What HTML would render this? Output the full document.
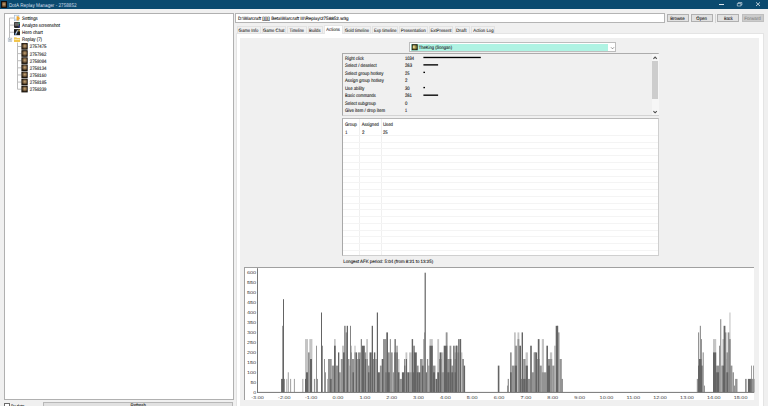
<!DOCTYPE html>
<html><head><meta charset="utf-8">
<style>
*{box-sizing:border-box;margin:0;padding:0}
html,body{width:768px;height:406px;overflow:hidden;background:#f0f0f0;font-family:"Liberation Sans",sans-serif;position:relative}
.a{position:absolute}
svg text{font-family:"Liberation Sans",sans-serif;text-rendering:geometricPrecision}
</style></head><body>
<div class="a" style="left:0px;top:0px;width:768px;height:9px;background:#0b4a6f"></div>
<div class="a" style="left:1px;top:1px;width:6px;height:7px;background:radial-gradient(circle at 50% 45%,#c8a878,#7a5a38 55%,#2a1c10);border:0.6px solid #111"></div>
<div class="a" style="left:719.3px;top:4.3px;width:4.7px;height:0.6px;background:#dce6ee"></div>
<div class="a" style="left:4px;top:13px;width:230px;height:387px;background:#fff;border:1px solid #b0b0b0"></div>
<div class="a" style="left:4.2px;top:403px;width:5.8px;height:6px;background:#fff;border:1px solid #6a6a6a"></div>
<div class="a" style="left:43.3px;top:402.1px;width:190.2px;height:8px;background:#e1e1e1;border:1px solid #b8b8b8"></div>
<div class="a" style="left:235.4px;top:13px;width:429.5px;height:10px;background:#fff;border:1px solid #b4b4b4"></div>
<div class="a" style="left:667px;top:14.0px;width:21.600000000000023px;height:8.4px;background:#e1e1e1;border:1px solid #b0b0b0"></div>
<div class="a" style="left:691.1px;top:14.0px;width:21.699999999999932px;height:8.4px;background:#e1e1e1;border:1px solid #b0b0b0"></div>
<div class="a" style="left:715.3px;top:13.5px;width:0.8px;height:9.5px;background:#d4d4d4"></div>
<div class="a" style="left:717.2px;top:14.0px;width:21.799999999999955px;height:8.4px;background:#e1e1e1;border:1px solid #b0b0b0"></div>
<div class="a" style="left:742px;top:14.0px;width:21.5px;height:8.4px;background:#cccccc;border:1px solid #bfbfbf"></div>
<div class="a" style="left:235.5px;top:33px;width:528px;height:380px;background:#fff;border:1px solid #e4e4e4"></div>
<div class="a" style="left:237px;top:25.8px;width:23.69999999999999px;height:7.3px;background:#f0f0f0;border:1px solid #e2e2e2;border-bottom:none"></div>
<div class="a" style="left:261.5px;top:25.8px;width:24.5px;height:7.3px;background:#f0f0f0;border:1px solid #e2e2e2;border-bottom:none"></div>
<div class="a" style="left:287px;top:25.8px;width:19.80000000000001px;height:7.3px;background:#f0f0f0;border:1px solid #e2e2e2;border-bottom:none"></div>
<div class="a" style="left:307.9px;top:25.8px;width:14.900000000000034px;height:7.3px;background:#f0f0f0;border:1px solid #e2e2e2;border-bottom:none"></div>
<div class="a" style="left:323.9px;top:24.9px;width:19.100000000000023px;height:9.2px;background:#fff;border:1px solid #e6e6e6;border-bottom:none;z-index:1"></div>
<div class="a" style="left:343.5px;top:25.8px;width:27.5px;height:7.3px;background:#f0f0f0;border:1px solid #e2e2e2;border-bottom:none"></div>
<div class="a" style="left:371.6px;top:25.8px;width:26.399999999999977px;height:7.3px;background:#f0f0f0;border:1px solid #e2e2e2;border-bottom:none"></div>
<div class="a" style="left:399.2px;top:25.8px;width:28.600000000000023px;height:7.3px;background:#f0f0f0;border:1px solid #e2e2e2;border-bottom:none"></div>
<div class="a" style="left:428.9px;top:25.8px;width:24.600000000000023px;height:7.3px;background:#f0f0f0;border:1px solid #e2e2e2;border-bottom:none"></div>
<div class="a" style="left:454.6px;top:25.8px;width:15.599999999999966px;height:7.3px;background:#f0f0f0;border:1px solid #e2e2e2;border-bottom:none"></div>
<div class="a" style="left:471.25px;top:25.8px;width:23.44999999999999px;height:7.3px;background:#f0f0f0;border:1px solid #e2e2e2;border-bottom:none"></div>
<div class="a" style="left:240px;top:37.8px;width:519px;height:380px;background:#f0f0f0"></div>
<div class="a" style="left:409.3px;top:42.2px;width:206.5px;height:10.3px;background:#fff;border:1px solid #bdbdbd"></div>
<div class="a" style="left:411px;top:44px;width:197px;height:6.6px;background:#aff3e3"></div>
<div class="a" style="left:342px;top:53px;width:317px;height:62.8px;background:#f0f0f0;border:1px solid #d4d4d4;border-left-color:#a8a8a8;border-top-color:#acacac"></div>
<div class="a" style="left:652px;top:54px;width:6.8px;height:61px;background:#f6f6f6"></div>
<div class="a" style="left:652.4px;top:61.2px;width:5.8px;height:37.6px;background:#cdcdcd"></div>
<div class="a" style="left:342px;top:118px;width:316.8px;height:137.6px;background:#fff;border:1px solid #cfcfcf;border-left-color:#a8a8a8;border-top-color:#b8b8b8"></div>
<div class="a" style="left:358.9px;top:119px;width:0.8px;height:136px;background:#f0f0f0"></div>
<div class="a" style="left:381.0px;top:119px;width:0.8px;height:136px;background:#f0f0f0"></div>
<div class="a" style="left:343px;top:134.9px;width:315px;height:0.8px;background:#f4f4f4"></div>
<div class="a" style="left:343px;top:141.67000000000002px;width:315px;height:0.8px;background:#f4f4f4"></div>
<div class="a" style="left:343px;top:148.44px;width:315px;height:0.8px;background:#f4f4f4"></div>
<div class="a" style="left:343px;top:155.21px;width:315px;height:0.8px;background:#f4f4f4"></div>
<div class="a" style="left:343px;top:161.98000000000002px;width:315px;height:0.8px;background:#f4f4f4"></div>
<div class="a" style="left:343px;top:168.75px;width:315px;height:0.8px;background:#f4f4f4"></div>
<div class="a" style="left:343px;top:175.52px;width:315px;height:0.8px;background:#f4f4f4"></div>
<div class="a" style="left:343px;top:182.29000000000002px;width:315px;height:0.8px;background:#f4f4f4"></div>
<div class="a" style="left:343px;top:189.06px;width:315px;height:0.8px;background:#f4f4f4"></div>
<div class="a" style="left:343px;top:195.82999999999998px;width:315px;height:0.8px;background:#f4f4f4"></div>
<div class="a" style="left:343px;top:202.6px;width:315px;height:0.8px;background:#f4f4f4"></div>
<div class="a" style="left:343px;top:209.37px;width:315px;height:0.8px;background:#f4f4f4"></div>
<div class="a" style="left:343px;top:216.14px;width:315px;height:0.8px;background:#f4f4f4"></div>
<div class="a" style="left:343px;top:222.91px;width:315px;height:0.8px;background:#f4f4f4"></div>
<div class="a" style="left:343px;top:229.68px;width:315px;height:0.8px;background:#f4f4f4"></div>
<div class="a" style="left:343px;top:236.45px;width:315px;height:0.8px;background:#f4f4f4"></div>
<div class="a" style="left:343px;top:243.22px;width:315px;height:0.8px;background:#f4f4f4"></div>
<div class="a" style="left:343px;top:249.99px;width:315px;height:0.8px;background:#f4f4f4"></div>
<div class="a" style="left:244px;top:267.4px;width:510.2px;height:132.6px;background:#fff;border-left:1px solid #a0a0a0;border-top:1px solid #a0a0a0"></div>
<svg class="a" style="left:0;top:0;z-index:5" width="768" height="406" viewBox="0 0 768 406">
<defs><radialGradient id="rg" cx="0.55" cy="0.45" r="0.6"><stop offset="0" stop-color="#c8a878"/><stop offset="0.55" stop-color="#7a6040"/><stop offset="1" stop-color="#2a2014"/></radialGradient><radialGradient id="rg2" cx="0.45" cy="0.5" r="0.65"><stop offset="0" stop-color="#d8c060"/><stop offset="0.6" stop-color="#807838"/><stop offset="1" stop-color="#283020"/></radialGradient></defs>
<text transform="translate(0 6.60) scale(1 1.100)" x="8.90" y="0" font-size="4.82" fill="#d0dfe9" textLength="67.70" lengthAdjust="spacingAndGlyphs" stroke="#d0dfe9" stroke-width="0.02">DotA Replay Manager - 2758852</text>
<path d="M737.3 3.5h3.6v2.5h-3.6z M738.3 3.5V2.5h3.6v2.5h-1" fill="none" stroke="#dce6ee" stroke-width="0.6"/>
<path d="M756 2.3L760 6M760 2.3L756 6" fill="none" stroke="#e0e8ee" stroke-width="0.8"/>
<path d="M9.5 18V38" stroke="#bcbcbc" stroke-width="1" fill="none"/>
<path d="M9.5 18.00H14" stroke="#bcbcbc" stroke-width="1" fill="none"/>
<path d="M9.5 25.12H14" stroke="#bcbcbc" stroke-width="1" fill="none"/>
<path d="M9.5 32.24H14" stroke="#bcbcbc" stroke-width="1" fill="none"/>
<path d="M17.5 42.5V89.20" stroke="#bcbcbc" stroke-width="1" fill="none"/>
<path d="M17.5 46.48H21.4" stroke="#bcbcbc" stroke-width="1" fill="none"/>
<path d="M17.5 53.60H21.4" stroke="#bcbcbc" stroke-width="1" fill="none"/>
<path d="M17.5 60.72H21.4" stroke="#bcbcbc" stroke-width="1" fill="none"/>
<path d="M17.5 67.84H21.4" stroke="#bcbcbc" stroke-width="1" fill="none"/>
<path d="M17.5 74.96H21.4" stroke="#bcbcbc" stroke-width="1" fill="none"/>
<path d="M17.5 82.08H21.4" stroke="#bcbcbc" stroke-width="1" fill="none"/>
<path d="M17.5 89.20H21.4" stroke="#bcbcbc" stroke-width="1" fill="none"/>
<rect x="8.2" y="38.1" width="3.6" height="3.6" fill="#eef1f4" stroke="#a8b4c0" stroke-width="0.6"/>
<path d="M9.1 39.9H10.9" stroke="#404850" stroke-width="0.6"/>
<rect x="14.3" y="15.2" width="4.6" height="5.6" fill="#f6f9fc" stroke="#9ab4cc" stroke-width="0.6"/>
<rect x="15" y="18.6" width="3" height="1.6" fill="#c8dcef"/>
<path d="M16.6 16.2h1.6l1.8 2.1-1.8 2.1h-1.6z" fill="#f0a830"/>
<rect x="14" y="22" width="6" height="5.9" rx="0.8" fill="#2a2a2a"/>
<rect x="14.6" y="22.6" width="4.6" height="3.2" fill="#6a6a6a"/>
<rect x="18.5" y="22.4" width="1.3" height="1.5" fill="#30a080"/>
<rect x="18.5" y="25.6" width="1.4" height="1.8" fill="#2a3aa0"/>
<rect x="14" y="29.1" width="6" height="6.1" fill="#1e1e1e"/>
<path d="M14.8 34.5L17 30.2h1.2l-2 4.3z" fill="#c8d4e0"/>
<rect x="18.4" y="29.6" width="1.4" height="1.8" fill="#e0c050"/>
<rect x="14.8" y="33.3" width="1.5" height="1.5" fill="#5a8ac0"/>
<path d="M14 37.3h2.4l0.6 0.7H20V41.8H14z" fill="#f4cc60"/>
<rect x="14" y="38.6" width="6" height="3.2" fill="#f0c040"/>
<rect x="14.3" y="38.9" width="5.4" height="1.2" fill="#fbe8a8"/>
<rect x="21.4" y="43.08" width="6.3" height="6.6" fill="#15110a"/>
<rect x="22.0" y="43.68" width="5.1" height="5.2" fill="url(#rg)"/>
<rect x="21.4" y="50.20" width="6.3" height="6.6" fill="#15110a"/>
<rect x="22.0" y="50.80" width="5.1" height="5.2" fill="url(#rg)"/>
<rect x="21.4" y="57.32" width="6.3" height="6.6" fill="#15110a"/>
<rect x="22.0" y="57.92" width="5.1" height="5.2" fill="url(#rg)"/>
<rect x="21.4" y="64.44" width="6.3" height="6.6" fill="#15110a"/>
<rect x="22.0" y="65.04" width="5.1" height="5.2" fill="url(#rg)"/>
<rect x="21.4" y="71.56" width="6.3" height="6.6" fill="#15110a"/>
<rect x="22.0" y="72.16" width="5.1" height="5.2" fill="url(#rg)"/>
<rect x="21.4" y="78.68" width="6.3" height="6.6" fill="#15110a"/>
<rect x="22.0" y="79.28" width="5.1" height="5.2" fill="url(#rg)"/>
<rect x="21.4" y="85.80" width="6.3" height="6.6" fill="#15110a"/>
<rect x="22.0" y="86.40" width="5.1" height="5.2" fill="url(#rg)"/>
<text transform="translate(0 19.90) scale(1 1.100)" x="22.10" y="0" font-size="4.55" fill="#202020" textLength="15.70" lengthAdjust="spacingAndGlyphs" stroke="#202020" stroke-width="0.09">Settings</text>
<text transform="translate(0 27.02) scale(1 1.100)" x="22.10" y="0" font-size="4.55" fill="#202020" textLength="37.90" lengthAdjust="spacingAndGlyphs" stroke="#202020" stroke-width="0.09">Analyze screenshot</text>
<text transform="translate(0 34.14) scale(1 1.100)" x="22.10" y="0" font-size="4.55" fill="#202020" textLength="20.60" lengthAdjust="spacingAndGlyphs" stroke="#202020" stroke-width="0.09">Hero chart</text>
<text transform="translate(0 41.26) scale(1 1.100)" x="22.10" y="0" font-size="4.55" fill="#202020" textLength="19.90" lengthAdjust="spacingAndGlyphs" stroke="#202020" stroke-width="0.09">Replay (7)</text>
<text transform="translate(0 48.38) scale(1 1.100)" x="29.80" y="0" font-size="4.55" fill="#202020" textLength="16.70" lengthAdjust="spacingAndGlyphs" stroke="#202020" stroke-width="0.09">2757475</text>
<text transform="translate(0 55.50) scale(1 1.100)" x="29.80" y="0" font-size="4.55" fill="#202020" textLength="16.70" lengthAdjust="spacingAndGlyphs" stroke="#202020" stroke-width="0.09">2757962</text>
<text transform="translate(0 62.62) scale(1 1.100)" x="29.80" y="0" font-size="4.55" fill="#202020" textLength="16.70" lengthAdjust="spacingAndGlyphs" stroke="#202020" stroke-width="0.09">2758084</text>
<text transform="translate(0 69.74) scale(1 1.100)" x="29.80" y="0" font-size="4.55" fill="#202020" textLength="16.70" lengthAdjust="spacingAndGlyphs" stroke="#202020" stroke-width="0.09">2758134</text>
<text transform="translate(0 76.86) scale(1 1.100)" x="29.80" y="0" font-size="4.55" fill="#202020" textLength="16.70" lengthAdjust="spacingAndGlyphs" stroke="#202020" stroke-width="0.09">2758160</text>
<text transform="translate(0 83.98) scale(1 1.100)" x="29.80" y="0" font-size="4.55" fill="#202020" textLength="16.70" lengthAdjust="spacingAndGlyphs" stroke="#202020" stroke-width="0.09">2758185</text>
<text transform="translate(0 91.10) scale(1 1.100)" x="29.80" y="0" font-size="4.55" fill="#202020" textLength="16.70" lengthAdjust="spacingAndGlyphs" stroke="#202020" stroke-width="0.09">2758339</text>
<text transform="translate(0 407.60) scale(1 1.100)" x="11.10" y="0" font-size="4.55" fill="#202020" textLength="13.40" lengthAdjust="spacingAndGlyphs" stroke="#202020" stroke-width="0.09">By date</text>
<text transform="translate(0 406.80) scale(1 1.100)" x="130.50" y="0" font-size="4.55" fill="#202020" textLength="15.50" lengthAdjust="spacingAndGlyphs" stroke="#202020" stroke-width="0.09">Refresh</text>
<text transform="translate(0 19.80) scale(1 1.100)" x="237.90" y="0" font-size="4.18" fill="#202020" textLength="110.70" lengthAdjust="spacingAndGlyphs" stroke="#202020" stroke-width="0.09">D:\Warcraft [][][] Beta\Warcraft III\Replay\2758852.w3g</text>
<text transform="translate(0 19.90) scale(1 1.100)" x="670.20" y="0" font-size="4.36" fill="#202020" textLength="14.50" lengthAdjust="spacingAndGlyphs" stroke="#202020" stroke-width="0.09">Browse</text>
<text transform="translate(0 19.90) scale(1 1.100)" x="696.30" y="0" font-size="4.36" fill="#202020" textLength="10.50" lengthAdjust="spacingAndGlyphs" stroke="#202020" stroke-width="0.09">Open</text>
<text transform="translate(0 19.90) scale(1 1.100)" x="724.00" y="0" font-size="4.36" fill="#202020" textLength="8.80" lengthAdjust="spacingAndGlyphs" stroke="#202020" stroke-width="0.09">Back</text>
<text transform="translate(0 19.90) scale(1 1.100)" x="744.30" y="0" font-size="4.36" fill="#888888" textLength="16.40" lengthAdjust="spacingAndGlyphs" stroke="#888888" stroke-width="0.09">Forward</text>
<text transform="translate(0 31.80) scale(1 1.100)" x="238.60" y="0" font-size="4.36" fill="#202020" textLength="19.80" lengthAdjust="spacingAndGlyphs" stroke="#202020" stroke-width="0.06">Game Info</text>
<text transform="translate(0 31.80) scale(1 1.100)" x="263.00" y="0" font-size="4.36" fill="#202020" textLength="21.50" lengthAdjust="spacingAndGlyphs" stroke="#202020" stroke-width="0.06">Game Chat</text>
<text transform="translate(0 31.80) scale(1 1.100)" x="289.60" y="0" font-size="4.36" fill="#202020" textLength="14.40" lengthAdjust="spacingAndGlyphs" stroke="#202020" stroke-width="0.06">Timeline</text>
<text transform="translate(0 31.80) scale(1 1.100)" x="309.10" y="0" font-size="4.36" fill="#202020" textLength="11.40" lengthAdjust="spacingAndGlyphs" stroke="#202020" stroke-width="0.06">Builds</text>
<text transform="translate(0 31.10) scale(1 1.100)" x="326.30" y="0" font-size="4.36" fill="#202020" textLength="13.60" lengthAdjust="spacingAndGlyphs" stroke="#202020" stroke-width="0.06">Actions</text>
<text transform="translate(0 31.80) scale(1 1.100)" x="345.00" y="0" font-size="4.36" fill="#202020" textLength="24.00" lengthAdjust="spacingAndGlyphs" stroke="#202020" stroke-width="0.06">Gold timeline</text>
<text transform="translate(0 31.80) scale(1 1.100)" x="374.00" y="0" font-size="4.36" fill="#202020" textLength="22.60" lengthAdjust="spacingAndGlyphs" stroke="#202020" stroke-width="0.06">Exp timeline</text>
<text transform="translate(0 31.80) scale(1 1.100)" x="400.70" y="0" font-size="4.36" fill="#202020" textLength="25.00" lengthAdjust="spacingAndGlyphs" stroke="#202020" stroke-width="0.06">Presentation</text>
<text transform="translate(0 31.80) scale(1 1.100)" x="430.40" y="0" font-size="4.36" fill="#202020" textLength="21.10" lengthAdjust="spacingAndGlyphs" stroke="#202020" stroke-width="0.06">ExtPresent</text>
<text transform="translate(0 31.80) scale(1 1.100)" x="456.00" y="0" font-size="4.36" fill="#202020" textLength="10.50" lengthAdjust="spacingAndGlyphs" stroke="#202020" stroke-width="0.06">Draft</text>
<text transform="translate(0 31.80) scale(1 1.100)" x="473.30" y="0" font-size="4.36" fill="#202020" textLength="20.30" lengthAdjust="spacingAndGlyphs" stroke="#202020" stroke-width="0.06">Action Log</text>
<rect x="411.7" y="44.2" width="6" height="6" fill="#221c10"/>
<rect x="412.3" y="44.8" width="4.8" height="4.8" fill="url(#rg2)"/>
<rect x="413.2" y="45.6" width="1.2" height="2.6" fill="#e8e0b0"/>
<text transform="translate(0 49.40) scale(1 1.100)" x="418.80" y="0" font-size="4.36" fill="#202020" textLength="33.20" lengthAdjust="spacingAndGlyphs" stroke="#202020" stroke-width="0.09">TheKing (Songan)</text>
<path d="M611 47.3L612.5 48.8L614 47.3" fill="none" stroke="#606060" stroke-width="0.7"/>
<path d="M653.4 58.8L655.1 57.1L656.8 58.8" fill="none" stroke="#505050" stroke-width="1.1"/>
<path d="M653.4 111.1L655.1 112.8L656.8 111.1" fill="none" stroke="#505050" stroke-width="1.1"/>
<text transform="translate(0 59.70) scale(1 1.100)" x="345.00" y="0" font-size="4.45" fill="#202020" textLength="18.90" lengthAdjust="spacingAndGlyphs" stroke="#202020" stroke-width="0.09">Right click</text>
<text transform="translate(0 59.70) scale(1 1.100)" x="404.90" y="0" font-size="4.45" fill="#202020" textLength="9.10" lengthAdjust="spacingAndGlyphs" stroke="#202020" stroke-width="0.09">1034</text>
<text transform="translate(0 67.10) scale(1 1.100)" x="345.00" y="0" font-size="4.45" fill="#202020" textLength="31.70" lengthAdjust="spacingAndGlyphs" stroke="#202020" stroke-width="0.09">Select / deselect</text>
<text transform="translate(0 67.10) scale(1 1.100)" x="404.90" y="0" font-size="4.45" fill="#202020" textLength="7.20" lengthAdjust="spacingAndGlyphs" stroke="#202020" stroke-width="0.09">263</text>
<text transform="translate(0 74.60) scale(1 1.100)" x="345.00" y="0" font-size="4.45" fill="#202020" textLength="38.40" lengthAdjust="spacingAndGlyphs" stroke="#202020" stroke-width="0.09">Select group hotkey</text>
<text transform="translate(0 74.60) scale(1 1.100)" x="404.90" y="0" font-size="4.45" fill="#202020" textLength="4.50" lengthAdjust="spacingAndGlyphs" stroke="#202020" stroke-width="0.09">25</text>
<text transform="translate(0 82.00) scale(1 1.100)" x="345.00" y="0" font-size="4.45" fill="#202020" textLength="38.80" lengthAdjust="spacingAndGlyphs" stroke="#202020" stroke-width="0.09">Assign group hotkey</text>
<text transform="translate(0 82.00) scale(1 1.100)" x="404.90" y="0" font-size="4.45" fill="#202020" textLength="2.40" lengthAdjust="spacingAndGlyphs" stroke="#202020" stroke-width="0.09">2</text>
<text transform="translate(0 89.80) scale(1 1.100)" x="345.00" y="0" font-size="4.45" fill="#202020" textLength="19.50" lengthAdjust="spacingAndGlyphs" stroke="#202020" stroke-width="0.09">Use ability</text>
<text transform="translate(0 89.80) scale(1 1.100)" x="404.90" y="0" font-size="4.45" fill="#202020" textLength="4.70" lengthAdjust="spacingAndGlyphs" stroke="#202020" stroke-width="0.09">30</text>
<text transform="translate(0 97.40) scale(1 1.100)" x="345.00" y="0" font-size="4.45" fill="#202020" textLength="30.90" lengthAdjust="spacingAndGlyphs" stroke="#202020" stroke-width="0.09">Basic commands</text>
<text transform="translate(0 97.40) scale(1 1.100)" x="404.90" y="0" font-size="4.45" fill="#202020" textLength="7.10" lengthAdjust="spacingAndGlyphs" stroke="#202020" stroke-width="0.09">261</text>
<text transform="translate(0 104.80) scale(1 1.100)" x="345.00" y="0" font-size="4.45" fill="#202020" textLength="30.90" lengthAdjust="spacingAndGlyphs" stroke="#202020" stroke-width="0.09">Select subgroup</text>
<text transform="translate(0 104.80) scale(1 1.100)" x="404.90" y="0" font-size="4.45" fill="#202020" textLength="2.40" lengthAdjust="spacingAndGlyphs" stroke="#202020" stroke-width="0.09">0</text>
<text transform="translate(0 112.30) scale(1 1.100)" x="345.00" y="0" font-size="4.45" fill="#202020" textLength="40.00" lengthAdjust="spacingAndGlyphs" stroke="#202020" stroke-width="0.09">Give item / drop item</text>
<text transform="translate(0 112.30) scale(1 1.100)" x="404.90" y="0" font-size="4.45" fill="#202020" textLength="2.10" lengthAdjust="spacingAndGlyphs" stroke="#202020" stroke-width="0.09">1</text>
<rect x="423.4" y="56.80" width="57.40" height="1.35" fill="#000"/>
<rect x="423.4" y="64.20" width="14.70" height="1.35" fill="#000"/>
<rect x="423.4" y="71.70" width="1.60" height="1.35" fill="#000"/>
<rect x="423.4" y="86.90" width="1.60" height="1.35" fill="#000"/>
<rect x="423.4" y="94.50" width="14.70" height="1.35" fill="#000"/>
<text transform="translate(0 125.90) scale(1 1.100)" x="345.00" y="0" font-size="4.45" fill="#202020" textLength="11.90" lengthAdjust="spacingAndGlyphs" stroke="#202020" stroke-width="0.09">Group</text>
<text transform="translate(0 125.90) scale(1 1.100)" x="361.70" y="0" font-size="4.45" fill="#202020" textLength="17.10" lengthAdjust="spacingAndGlyphs" stroke="#202020" stroke-width="0.09">Assigned</text>
<text transform="translate(0 125.90) scale(1 1.100)" x="382.90" y="0" font-size="4.45" fill="#202020" textLength="10.00" lengthAdjust="spacingAndGlyphs" stroke="#202020" stroke-width="0.09">Used</text>
<text transform="translate(0 133.60) scale(1 1.100)" x="345.30" y="0" font-size="4.45" fill="#202020" textLength="2.10" lengthAdjust="spacingAndGlyphs" stroke="#202020" stroke-width="0.09">1</text>
<text transform="translate(0 133.60) scale(1 1.100)" x="361.90" y="0" font-size="4.45" fill="#202020" textLength="2.50" lengthAdjust="spacingAndGlyphs" stroke="#202020" stroke-width="0.09">2</text>
<text transform="translate(0 133.60) scale(1 1.100)" x="382.90" y="0" font-size="4.45" fill="#202020" textLength="4.70" lengthAdjust="spacingAndGlyphs" stroke="#202020" stroke-width="0.09">25</text>
<text transform="translate(0 262.90) scale(1 1.100)" x="343.30" y="0" font-size="4.18" fill="#202020" textLength="89.80" lengthAdjust="spacingAndGlyphs" stroke="#202020" stroke-width="0.09">Longest AFK period: 5:04 (from 8:21 to 13:25)</text>
<rect x="286.0" y="378.9" width="1.3" height="13.3" fill="#c4c4c4"/>
<rect x="305.0" y="339.1" width="3.0" height="53.1" fill="#c4c4c4"/>
<rect x="309.3" y="339.1" width="3.1" height="53.1" fill="#c4c4c4"/>
<rect x="334.0" y="339.1" width="1.7" height="53.1" fill="#c4c4c4"/>
<rect x="342.0" y="345.7" width="2.0" height="46.5" fill="#c4c4c4"/>
<rect x="351.0" y="345.7" width="1.0" height="46.5" fill="#c4c4c4"/>
<rect x="354.4" y="345.7" width="1.2" height="46.5" fill="#c4c4c4"/>
<rect x="366.2" y="339.1" width="1.8" height="53.1" fill="#c4c4c4"/>
<rect x="397.7" y="359.0" width="1.8" height="33.2" fill="#c4c4c4"/>
<rect x="405.5" y="352.4" width="1.8" height="39.8" fill="#c4c4c4"/>
<rect x="409.1" y="352.4" width="2.6" height="39.8" fill="#c4c4c4"/>
<rect x="429.5" y="339.1" width="3.3" height="53.1" fill="#c4c4c4"/>
<rect x="437.3" y="339.1" width="1.8" height="53.1" fill="#c4c4c4"/>
<rect x="441.5" y="352.4" width="1.8" height="39.8" fill="#c4c4c4"/>
<rect x="445.5" y="332.4" width="1.8" height="59.8" fill="#c4c4c4"/>
<rect x="454.6" y="352.4" width="1.8" height="39.8" fill="#c4c4c4"/>
<rect x="459.3" y="352.4" width="1.8" height="39.8" fill="#c4c4c4"/>
<rect x="461.1" y="352.4" width="1.3" height="39.8" fill="#c4c4c4"/>
<rect x="514.0" y="332.4" width="1.8" height="59.8" fill="#c4c4c4"/>
<rect x="517.5" y="332.4" width="1.8" height="59.8" fill="#c4c4c4"/>
<rect x="525.6" y="352.4" width="2.3" height="39.8" fill="#c4c4c4"/>
<rect x="533.7" y="352.4" width="2.3" height="39.8" fill="#c4c4c4"/>
<rect x="541.8" y="339.1" width="2.2" height="53.1" fill="#c4c4c4"/>
<rect x="549.9" y="352.4" width="2.3" height="39.8" fill="#c4c4c4"/>
<rect x="554.0" y="345.7" width="1.7" height="46.5" fill="#c4c4c4"/>
<rect x="713.0" y="339.1" width="3.2" height="53.1" fill="#c4c4c4"/>
<rect x="722.4" y="339.1" width="2.3" height="53.1" fill="#c4c4c4"/>
<rect x="729.4" y="312.5" width="1.1" height="79.7" fill="#c4c4c4"/>
<rect x="287.8" y="372.3" width="0.9" height="19.9" fill="#949494"/>
<rect x="290.2" y="378.9" width="0.9" height="13.3" fill="#949494"/>
<rect x="293.9" y="378.9" width="0.9" height="13.3" fill="#949494"/>
<rect x="302.4" y="378.9" width="0.9" height="13.3" fill="#949494"/>
<rect x="308.0" y="352.4" width="1.7" height="39.8" fill="#949494"/>
<rect x="313.9" y="378.9" width="1.3" height="13.3" fill="#949494"/>
<rect x="316.0" y="345.7" width="1.0" height="46.5" fill="#949494"/>
<rect x="317.0" y="378.9" width="1.0" height="13.3" fill="#949494"/>
<rect x="322.0" y="345.7" width="1.0" height="46.5" fill="#949494"/>
<rect x="324.0" y="359.0" width="1.0" height="33.2" fill="#949494"/>
<rect x="325.0" y="372.3" width="1.0" height="19.9" fill="#949494"/>
<rect x="327.3" y="378.9" width="1.0" height="13.3" fill="#949494"/>
<rect x="328.0" y="359.0" width="3.7" height="33.2" fill="#949494"/>
<rect x="331.7" y="365.6" width="3.1" height="26.6" fill="#949494"/>
<rect x="335.7" y="365.6" width="2.7" height="26.6" fill="#949494"/>
<rect x="339.0" y="372.3" width="1.8" height="19.9" fill="#949494"/>
<rect x="340.8" y="359.0" width="3.2" height="33.2" fill="#949494"/>
<rect x="344.0" y="325.8" width="1.0" height="66.4" fill="#949494"/>
<rect x="345.7" y="332.4" width="1.8" height="59.8" fill="#949494"/>
<rect x="348.0" y="359.0" width="1.5" height="33.2" fill="#949494"/>
<rect x="349.5" y="365.6" width="0.7" height="26.6" fill="#949494"/>
<rect x="351.0" y="352.4" width="1.0" height="39.8" fill="#949494"/>
<rect x="352.0" y="359.0" width="2.4" height="33.2" fill="#949494"/>
<rect x="354.4" y="352.4" width="1.2" height="39.8" fill="#949494"/>
<rect x="357.1" y="359.0" width="0.9" height="33.2" fill="#949494"/>
<rect x="358.0" y="352.4" width="2.8" height="39.8" fill="#949494"/>
<rect x="364.8" y="352.4" width="1.4" height="39.8" fill="#949494"/>
<rect x="366.2" y="359.0" width="1.8" height="33.2" fill="#949494"/>
<rect x="367.7" y="365.6" width="1.8" height="26.6" fill="#949494"/>
<rect x="373.0" y="359.0" width="1.4" height="33.2" fill="#949494"/>
<rect x="375.3" y="359.0" width="1.5" height="33.2" fill="#949494"/>
<rect x="379.9" y="365.6" width="1.8" height="26.6" fill="#949494"/>
<rect x="383.0" y="339.1" width="3.3" height="53.1" fill="#949494"/>
<rect x="388.0" y="352.4" width="1.8" height="39.8" fill="#949494"/>
<rect x="389.8" y="339.1" width="1.2" height="53.1" fill="#949494"/>
<rect x="391.0" y="352.4" width="1.7" height="39.8" fill="#949494"/>
<rect x="392.7" y="372.3" width="1.3" height="19.9" fill="#949494"/>
<rect x="394.0" y="352.4" width="2.4" height="39.8" fill="#949494"/>
<rect x="396.4" y="345.7" width="1.3" height="46.5" fill="#949494"/>
<rect x="399.5" y="378.9" width="2.4" height="13.3" fill="#949494"/>
<rect x="404.0" y="365.6" width="1.5" height="26.6" fill="#949494"/>
<rect x="405.5" y="372.3" width="1.8" height="19.9" fill="#949494"/>
<rect x="409.1" y="372.3" width="2.6" height="19.9" fill="#949494"/>
<rect x="413.1" y="345.7" width="1.9" height="46.5" fill="#949494"/>
<rect x="416.8" y="365.6" width="1.8" height="26.6" fill="#949494"/>
<rect x="420.0" y="359.0" width="2.7" height="33.2" fill="#949494"/>
<rect x="423.3" y="339.1" width="1.3" height="53.1" fill="#949494"/>
<rect x="424.0" y="332.4" width="0.8" height="59.8" fill="#949494"/>
<rect x="426.9" y="359.0" width="1.3" height="33.2" fill="#949494"/>
<rect x="428.2" y="365.6" width="1.3" height="26.6" fill="#949494"/>
<rect x="432.8" y="365.6" width="2.7" height="26.6" fill="#949494"/>
<rect x="439.1" y="359.0" width="2.4" height="33.2" fill="#949494"/>
<rect x="441.5" y="372.3" width="1.8" height="19.9" fill="#949494"/>
<rect x="443.3" y="372.3" width="1.8" height="19.9" fill="#949494"/>
<rect x="447.3" y="359.0" width="2.2" height="33.2" fill="#949494"/>
<rect x="449.5" y="345.7" width="1.8" height="46.5" fill="#949494"/>
<rect x="451.3" y="365.6" width="1.9" height="26.6" fill="#949494"/>
<rect x="454.6" y="359.0" width="1.8" height="33.2" fill="#949494"/>
<rect x="456.0" y="345.7" width="1.5" height="46.5" fill="#949494"/>
<rect x="457.3" y="352.4" width="1.4" height="39.8" fill="#949494"/>
<rect x="459.3" y="339.1" width="1.8" height="53.1" fill="#949494"/>
<rect x="507.0" y="385.6" width="1.2" height="6.6" fill="#949494"/>
<rect x="507.7" y="378.9" width="1.3" height="13.3" fill="#949494"/>
<rect x="510.0" y="352.4" width="1.7" height="39.8" fill="#949494"/>
<rect x="511.7" y="365.6" width="3.3" height="26.6" fill="#949494"/>
<rect x="515.0" y="345.7" width="2.0" height="46.5" fill="#949494"/>
<rect x="517.5" y="339.1" width="1.8" height="53.1" fill="#949494"/>
<rect x="521.0" y="378.9" width="2.2" height="13.3" fill="#949494"/>
<rect x="523.2" y="359.0" width="2.4" height="33.2" fill="#949494"/>
<rect x="527.9" y="378.9" width="2.3" height="13.3" fill="#949494"/>
<rect x="531.8" y="372.3" width="2.3" height="19.9" fill="#949494"/>
<rect x="533.7" y="352.4" width="2.3" height="39.8" fill="#949494"/>
<rect x="537.1" y="359.0" width="2.4" height="33.2" fill="#949494"/>
<rect x="539.5" y="365.6" width="2.3" height="26.6" fill="#949494"/>
<rect x="541.8" y="372.3" width="2.2" height="19.9" fill="#949494"/>
<rect x="544.0" y="372.3" width="2.4" height="19.9" fill="#949494"/>
<rect x="548.0" y="359.0" width="2.3" height="33.2" fill="#949494"/>
<rect x="549.9" y="359.0" width="2.3" height="33.2" fill="#949494"/>
<rect x="552.2" y="365.6" width="2.3" height="26.6" fill="#949494"/>
<rect x="556.0" y="359.0" width="1.9" height="33.2" fill="#949494"/>
<rect x="557.2" y="325.8" width="1.1" height="66.4" fill="#949494"/>
<rect x="557.9" y="332.4" width="1.6" height="59.8" fill="#949494"/>
<rect x="559.5" y="359.0" width="2.3" height="33.2" fill="#949494"/>
<rect x="561.0" y="378.9" width="2.0" height="13.3" fill="#949494"/>
<rect x="696.8" y="378.9" width="1.2" height="13.3" fill="#949494"/>
<rect x="698.0" y="332.4" width="1.1" height="59.8" fill="#949494"/>
<rect x="699.8" y="325.8" width="1.2" height="66.4" fill="#949494"/>
<rect x="701.0" y="339.1" width="1.0" height="53.1" fill="#949494"/>
<rect x="702.6" y="352.4" width="1.2" height="39.8" fill="#949494"/>
<rect x="703.8" y="385.6" width="1.2" height="6.6" fill="#949494"/>
<rect x="716.2" y="365.6" width="2.8" height="26.6" fill="#949494"/>
<rect x="719.0" y="345.7" width="1.1" height="46.5" fill="#949494"/>
<rect x="720.1" y="319.2" width="1.2" height="73.0" fill="#949494"/>
<rect x="721.3" y="365.6" width="1.1" height="26.6" fill="#949494"/>
<rect x="724.7" y="359.0" width="1.7" height="33.2" fill="#949494"/>
<rect x="724.7" y="332.4" width="1.7" height="59.8" fill="#949494"/>
<rect x="726.4" y="352.4" width="1.8" height="39.8" fill="#949494"/>
<rect x="727.7" y="332.4" width="1.7" height="59.8" fill="#949494"/>
<rect x="730.5" y="365.6" width="1.9" height="26.6" fill="#949494"/>
<rect x="732.4" y="372.3" width="1.6" height="19.9" fill="#949494"/>
<rect x="734.0" y="385.6" width="1.1" height="6.6" fill="#949494"/>
<rect x="735.1" y="378.9" width="2.4" height="13.3" fill="#949494"/>
<rect x="745.0" y="378.9" width="1.7" height="13.3" fill="#949494"/>
<rect x="750.2" y="378.9" width="4.4" height="13.3" fill="#949494"/>
<rect x="751.0" y="365.6" width="0.9" height="26.6" fill="#949494"/>
<rect x="753.0" y="365.6" width="0.9" height="26.6" fill="#949494"/>
<rect x="281.1" y="378.9" width="3.6" height="13.3" fill="#646464"/>
<rect x="282.4" y="325.8" width="0.9" height="66.4" fill="#646464"/>
<rect x="283.0" y="299.2" width="1.0" height="93.0" fill="#646464"/>
<rect x="305.0" y="378.9" width="1.5" height="13.3" fill="#646464"/>
<rect x="306.0" y="372.3" width="2.0" height="19.9" fill="#646464"/>
<rect x="310.0" y="359.0" width="2.0" height="33.2" fill="#646464"/>
<rect x="321.0" y="312.5" width="1.0" height="79.7" fill="#646464"/>
<rect x="329.8" y="378.9" width="1.9" height="13.3" fill="#646464"/>
<rect x="334.0" y="345.7" width="1.7" height="46.5" fill="#646464"/>
<rect x="338.0" y="352.4" width="1.3" height="39.8" fill="#646464"/>
<rect x="343.0" y="352.4" width="1.8" height="39.8" fill="#646464"/>
<rect x="345.5" y="325.8" width="0.8" height="66.4" fill="#646464"/>
<rect x="347.0" y="325.8" width="1.0" height="66.4" fill="#646464"/>
<rect x="350.2" y="325.8" width="0.8" height="66.4" fill="#646464"/>
<rect x="352.5" y="372.3" width="1.5" height="19.9" fill="#646464"/>
<rect x="355.6" y="352.4" width="1.5" height="39.8" fill="#646464"/>
<rect x="358.5" y="359.0" width="1.5" height="33.2" fill="#646464"/>
<rect x="360.8" y="339.1" width="1.0" height="53.1" fill="#646464"/>
<rect x="361.8" y="345.7" width="3.0" height="46.5" fill="#646464"/>
<rect x="365.0" y="359.0" width="1.0" height="33.2" fill="#646464"/>
<rect x="368.0" y="372.3" width="1.5" height="19.9" fill="#646464"/>
<rect x="369.5" y="352.4" width="2.2" height="39.8" fill="#646464"/>
<rect x="371.7" y="325.8" width="1.3" height="66.4" fill="#646464"/>
<rect x="373.9" y="352.4" width="1.4" height="39.8" fill="#646464"/>
<rect x="376.8" y="312.5" width="1.2" height="79.7" fill="#646464"/>
<rect x="378.0" y="372.3" width="1.9" height="19.9" fill="#646464"/>
<rect x="381.7" y="359.0" width="1.8" height="33.2" fill="#646464"/>
<rect x="385.5" y="372.3" width="1.0" height="19.9" fill="#646464"/>
<rect x="386.3" y="332.4" width="1.7" height="59.8" fill="#646464"/>
<rect x="388.0" y="372.3" width="1.8" height="19.9" fill="#646464"/>
<rect x="394.5" y="339.1" width="1.3" height="53.1" fill="#646464"/>
<rect x="396.4" y="352.4" width="1.3" height="39.8" fill="#646464"/>
<rect x="397.7" y="372.3" width="1.8" height="19.9" fill="#646464"/>
<rect x="401.9" y="372.3" width="2.1" height="19.9" fill="#646464"/>
<rect x="404.3" y="359.0" width="1.0" height="33.2" fill="#646464"/>
<rect x="406.0" y="359.0" width="1.0" height="33.2" fill="#646464"/>
<rect x="407.3" y="372.3" width="1.8" height="19.9" fill="#646464"/>
<rect x="411.7" y="339.1" width="1.4" height="53.1" fill="#646464"/>
<rect x="413.1" y="372.3" width="0.9" height="19.9" fill="#646464"/>
<rect x="414.0" y="352.4" width="2.8" height="39.8" fill="#646464"/>
<rect x="416.8" y="372.3" width="1.8" height="19.9" fill="#646464"/>
<rect x="418.6" y="372.3" width="1.8" height="19.9" fill="#646464"/>
<rect x="421.8" y="365.6" width="1.8" height="26.6" fill="#646464"/>
<rect x="424.6" y="272.7" width="1.2" height="119.5" fill="#646464"/>
<rect x="425.8" y="372.3" width="1.1" height="19.9" fill="#646464"/>
<rect x="429.5" y="345.7" width="3.3" height="46.5" fill="#646464"/>
<rect x="433.0" y="372.3" width="2.0" height="19.9" fill="#646464"/>
<rect x="435.5" y="378.9" width="1.8" height="13.3" fill="#646464"/>
<rect x="437.3" y="372.3" width="1.8" height="19.9" fill="#646464"/>
<rect x="439.6" y="352.4" width="1.9" height="39.8" fill="#646464"/>
<rect x="443.7" y="345.7" width="3.6" height="46.5" fill="#646464"/>
<rect x="446.5" y="332.4" width="0.8" height="59.8" fill="#646464"/>
<rect x="447.3" y="372.3" width="2.2" height="19.9" fill="#646464"/>
<rect x="449.5" y="359.0" width="1.8" height="33.2" fill="#646464"/>
<rect x="451.3" y="372.3" width="1.9" height="19.9" fill="#646464"/>
<rect x="453.2" y="345.7" width="1.4" height="46.5" fill="#646464"/>
<rect x="454.6" y="372.3" width="1.8" height="19.9" fill="#646464"/>
<rect x="455.5" y="345.7" width="1.8" height="46.5" fill="#646464"/>
<rect x="458.2" y="339.1" width="1.1" height="53.1" fill="#646464"/>
<rect x="460.0" y="339.1" width="1.1" height="53.1" fill="#646464"/>
<rect x="462.4" y="359.0" width="1.3" height="33.2" fill="#646464"/>
<rect x="463.7" y="365.6" width="1.4" height="26.6" fill="#646464"/>
<rect x="497.8" y="365.6" width="1.6" height="26.6" fill="#646464"/>
<rect x="510.0" y="372.3" width="1.7" height="19.9" fill="#646464"/>
<rect x="515.0" y="365.6" width="2.0" height="26.6" fill="#646464"/>
<rect x="519.3" y="345.7" width="1.7" height="46.5" fill="#646464"/>
<rect x="521.6" y="332.4" width="1.4" height="59.8" fill="#646464"/>
<rect x="523.2" y="378.9" width="2.4" height="13.3" fill="#646464"/>
<rect x="525.6" y="365.6" width="2.3" height="26.6" fill="#646464"/>
<rect x="530.2" y="345.7" width="1.6" height="46.5" fill="#646464"/>
<rect x="535.5" y="352.4" width="1.6" height="39.8" fill="#646464"/>
<rect x="537.8" y="339.1" width="1.7" height="53.1" fill="#646464"/>
<rect x="546.4" y="345.7" width="1.6" height="46.5" fill="#646464"/>
<rect x="548.0" y="365.6" width="2.0" height="26.6" fill="#646464"/>
<rect x="555.7" y="325.8" width="2.3" height="66.4" fill="#646464"/>
<rect x="698.0" y="365.6" width="4.6" height="26.6" fill="#646464"/>
<rect x="699.0" y="359.0" width="2.5" height="33.2" fill="#646464"/>
<rect x="713.0" y="352.4" width="3.2" height="39.8" fill="#646464"/>
<rect x="716.2" y="372.3" width="2.8" height="19.9" fill="#646464"/>
<rect x="722.4" y="365.6" width="2.3" height="26.6" fill="#646464"/>
<rect x="723.6" y="325.8" width="1.8" height="66.4" fill="#646464"/>
<rect x="726.4" y="372.3" width="1.8" height="19.9" fill="#646464"/>
<rect x="729.4" y="339.1" width="1.1" height="53.1" fill="#646464"/>
<rect x="747.9" y="378.9" width="2.3" height="13.3" fill="#646464"/>
<rect x="750.2" y="378.9" width="1.3" height="13.3" fill="#646464"/>
<rect x="257" y="268.2" width="1" height="124.6" fill="#767676"/>
<rect x="257" y="391.9" width="497.2" height="1" fill="#767676"/>
<text transform="translate(0 393.80) scale(1 0.900)" x="253.30" y="0" font-size="4.67" fill="#404040" textLength="2.90" lengthAdjust="spacingAndGlyphs">0</text>
<text transform="translate(0 383.84) scale(1 0.900)" x="250.40" y="0" font-size="4.67" fill="#404040" textLength="5.80" lengthAdjust="spacingAndGlyphs">50</text>
<text transform="translate(0 373.87) scale(1 0.900)" x="247.00" y="0" font-size="4.67" fill="#404040" textLength="9.20" lengthAdjust="spacingAndGlyphs">100</text>
<text transform="translate(0 363.91) scale(1 0.900)" x="247.00" y="0" font-size="4.67" fill="#404040" textLength="9.20" lengthAdjust="spacingAndGlyphs">150</text>
<text transform="translate(0 353.94) scale(1 0.900)" x="247.00" y="0" font-size="4.67" fill="#404040" textLength="9.20" lengthAdjust="spacingAndGlyphs">200</text>
<text transform="translate(0 343.98) scale(1 0.900)" x="247.00" y="0" font-size="4.67" fill="#404040" textLength="9.20" lengthAdjust="spacingAndGlyphs">250</text>
<text transform="translate(0 334.01) scale(1 0.900)" x="247.00" y="0" font-size="4.67" fill="#404040" textLength="9.20" lengthAdjust="spacingAndGlyphs">300</text>
<text transform="translate(0 324.05) scale(1 0.900)" x="247.00" y="0" font-size="4.67" fill="#404040" textLength="9.20" lengthAdjust="spacingAndGlyphs">350</text>
<text transform="translate(0 314.08) scale(1 0.900)" x="247.00" y="0" font-size="4.67" fill="#404040" textLength="9.20" lengthAdjust="spacingAndGlyphs">400</text>
<text transform="translate(0 304.12) scale(1 0.900)" x="247.00" y="0" font-size="4.67" fill="#404040" textLength="9.20" lengthAdjust="spacingAndGlyphs">450</text>
<text transform="translate(0 294.15) scale(1 0.900)" x="247.00" y="0" font-size="4.67" fill="#404040" textLength="9.20" lengthAdjust="spacingAndGlyphs">500</text>
<text transform="translate(0 284.19) scale(1 0.900)" x="247.00" y="0" font-size="4.67" fill="#404040" textLength="9.20" lengthAdjust="spacingAndGlyphs">550</text>
<text transform="translate(0 274.22) scale(1 0.900)" x="247.00" y="0" font-size="4.67" fill="#404040" textLength="9.20" lengthAdjust="spacingAndGlyphs">600</text>
<text transform="translate(0 399.00) scale(1 0.900)" x="251.30" y="0" font-size="4.67" fill="#404040" textLength="12.40" lengthAdjust="spacingAndGlyphs">-3:00</text>
<text transform="translate(0 399.00) scale(1 0.900)" x="278.14" y="0" font-size="4.67" fill="#404040" textLength="12.40" lengthAdjust="spacingAndGlyphs">-2:00</text>
<text transform="translate(0 399.00) scale(1 0.900)" x="304.98" y="0" font-size="4.67" fill="#404040" textLength="12.40" lengthAdjust="spacingAndGlyphs">-1:00</text>
<text transform="translate(0 399.00) scale(1 0.900)" x="332.62" y="0" font-size="4.67" fill="#404040" textLength="10.80" lengthAdjust="spacingAndGlyphs">0:00</text>
<text transform="translate(0 399.00) scale(1 0.900)" x="359.46" y="0" font-size="4.67" fill="#404040" textLength="10.80" lengthAdjust="spacingAndGlyphs">1:00</text>
<text transform="translate(0 399.00) scale(1 0.900)" x="386.30" y="0" font-size="4.67" fill="#404040" textLength="10.80" lengthAdjust="spacingAndGlyphs">2:00</text>
<text transform="translate(0 399.00) scale(1 0.900)" x="413.14" y="0" font-size="4.67" fill="#404040" textLength="10.80" lengthAdjust="spacingAndGlyphs">3:00</text>
<text transform="translate(0 399.00) scale(1 0.900)" x="439.98" y="0" font-size="4.67" fill="#404040" textLength="10.80" lengthAdjust="spacingAndGlyphs">4:00</text>
<text transform="translate(0 399.00) scale(1 0.900)" x="466.82" y="0" font-size="4.67" fill="#404040" textLength="10.80" lengthAdjust="spacingAndGlyphs">5:00</text>
<text transform="translate(0 399.00) scale(1 0.900)" x="493.66" y="0" font-size="4.67" fill="#404040" textLength="10.80" lengthAdjust="spacingAndGlyphs">6:00</text>
<text transform="translate(0 399.00) scale(1 0.900)" x="520.50" y="0" font-size="4.67" fill="#404040" textLength="10.80" lengthAdjust="spacingAndGlyphs">7:00</text>
<text transform="translate(0 399.00) scale(1 0.900)" x="547.34" y="0" font-size="4.67" fill="#404040" textLength="10.80" lengthAdjust="spacingAndGlyphs">8:00</text>
<text transform="translate(0 399.00) scale(1 0.900)" x="574.18" y="0" font-size="4.67" fill="#404040" textLength="10.80" lengthAdjust="spacingAndGlyphs">9:00</text>
<text transform="translate(0 399.00) scale(1 0.900)" x="599.62" y="0" font-size="4.67" fill="#404040" textLength="13.60" lengthAdjust="spacingAndGlyphs">10:00</text>
<text transform="translate(0 399.00) scale(1 0.900)" x="626.46" y="0" font-size="4.67" fill="#404040" textLength="13.60" lengthAdjust="spacingAndGlyphs">11:00</text>
<text transform="translate(0 399.00) scale(1 0.900)" x="653.30" y="0" font-size="4.67" fill="#404040" textLength="13.60" lengthAdjust="spacingAndGlyphs">12:00</text>
<text transform="translate(0 399.00) scale(1 0.900)" x="680.14" y="0" font-size="4.67" fill="#404040" textLength="13.60" lengthAdjust="spacingAndGlyphs">13:00</text>
<text transform="translate(0 399.00) scale(1 0.900)" x="706.98" y="0" font-size="4.67" fill="#404040" textLength="13.60" lengthAdjust="spacingAndGlyphs">14:00</text>
<text transform="translate(0 399.00) scale(1 0.900)" x="733.82" y="0" font-size="4.67" fill="#404040" textLength="13.60" lengthAdjust="spacingAndGlyphs">15:00</text>
</svg>
</body></html>
